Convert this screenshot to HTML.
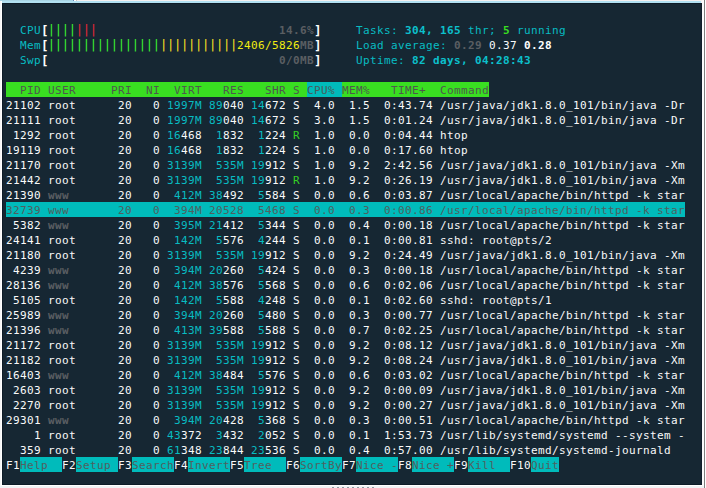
<!DOCTYPE html>
<html lang="en">
<head>
<meta charset="utf-8">
<title>htop</title>
<style>
html,body{margin:0;padding:0;}
body{width:706px;height:488px;overflow:hidden;background:#f1f3f5;position:relative;
font-family:"DejaVu Sans Mono","Liberation Mono",monospace;}
#tabs{position:absolute;left:0;top:0;width:706px;height:1px;background:#f4efee;}
#tabs b{position:absolute;left:0;top:0;width:73px;height:1px;background:#a9d5e5;}
#tabs u{position:absolute;left:73px;top:0;width:1px;height:1px;background:#6a86b8;}
#tabs s{position:absolute;left:74px;top:0;width:2px;height:1px;background:#ffffff;}
#tabs em{position:absolute;left:76px;top:0;width:1px;height:1px;background:#cfc9c9;}
#strip{position:absolute;left:2px;top:1px;width:699px;height:2px;background:#b1e0f1;}
#wl{position:absolute;left:0;top:1px;width:2px;height:485px;background:linear-gradient(90deg,#f6f7f8 0,#f6f7f8 1px,#fff 1px,#fff 2px);}
#wb{position:absolute;left:1px;top:485px;width:703px;height:1px;background:#fff;}
#wr{position:absolute;left:702px;top:0;width:2px;height:486px;background:#fbfbfb;}
#gl{position:absolute;left:704px;top:0;width:1px;height:488px;background:#808080;}
#gw{position:absolute;left:705px;top:0;width:1px;height:488px;background:#fff;}
#grip i{position:absolute;top:487px;width:2px;height:1px;background:#9299a1;}
#term{position:absolute;left:2px;top:3px;width:700px;height:482px;background:#162733;
box-shadow:inset 1px 1px 0 #0d1b27, inset 0 -1px 0 #0d1b27, inset -1px 0 0 #111f2b;}
.bg{position:absolute;height:15px;}
.gr{background:#39de21;}
.cy{background:#00bbbb;}
.l{position:absolute;left:6px;height:15px;line-height:15px;margin-top:1.0px;font-size:11px;white-space:pre;color:#fafafa;
letter-spacing:0.3774px;font-kerning:none;font-variant-ligatures:none;}
.c{color:#08bcc2;}
.C{color:#0cc0cc;font-weight:bold;}
.g{color:#35d024;}
.G{color:#39de21;font-weight:bold;}
.r{color:#c82030;}
.vg,.vr,.vy{font-size:13px;letter-spacing:-0.8267px;line-height:0;position:relative;left:-0.6px;}
.vy{left:-0.3px;}
.vg{color:#3cea30;}
.vr{color:#e02838;}
.vy{color:#eedc24;}
.bk{color:#ffffff;font-weight:bold;font-size:12.5px;letter-spacing:-0.5256px;line-height:0;position:relative;top:1px;}
.Y{color:#f2ec10;}
.k{color:#5a5e62;font-weight:bold;}
.b{color:#ffffff;font-weight:bold;}
.hd{color:#4e584e;}
.hs{color:#4a5a5a;}
.sel{color:#50605f;}
.fk{color:#50605f;}
</style>
</head>
<body>
<div id="tabs"><b></b><u></u><s></s><em></em></div>
<div id="strip"></div>
<div id="wl"></div><div id="wb"></div><div id="wr"></div><div id="gl"></div><div id="gw"></div>
<div id="grip"><i style="left:332px"></i><i style="left:337px"></i><i style="left:342px"></i><i style="left:347px"></i><i style="left:352px"></i><i style="left:357px"></i><i style="left:362px"></i><i style="left:367px"></i><i style="left:372px"></i></div>
<div id="term"></div>
<div class="bg gr" style="left:6px;top:82px;width:483px"></div>
<div class="bg cy" style="left:307px;top:82px;width:35px"></div>
<div class="bg cy" style="left:6px;top:202px;width:679px"></div>
<div class="bg cy" style="left:20px;top:457px;width:42px"></div>
<div class="bg cy" style="left:76px;top:457px;width:42px"></div>
<div class="bg cy" style="left:132px;top:457px;width:42px"></div>
<div class="bg cy" style="left:188px;top:457px;width:42px"></div>
<div class="bg cy" style="left:244px;top:457px;width:42px"></div>
<div class="bg cy" style="left:300px;top:457px;width:42px"></div>
<div class="bg cy" style="left:356px;top:457px;width:42px"></div>
<div class="bg cy" style="left:412px;top:457px;width:42px"></div>
<div class="bg cy" style="left:468px;top:457px;width:42px"></div>
<div class="bg cy" style="left:531px;top:457px;width:28px"></div>
<div class="l" style="top:22px">  <span class="c">CPU</span><span class="bk">[</span><span class="vg">||||</span><span class="vr">|||</span>                          <span class="k">14.6%</span><span class="bk">]</span>     <span class="c">Tasks: </span><span class="C">304, 165</span><span class="c"> thr; </span><span class="G">5</span><span class="c"> running</span></div>
<div class="l" style="top:37px">  <span class="c">Mem</span><span class="bk">[</span><span class="vg">||||||||||||||||</span><span class="vy">|||||||||||</span><span class="Y">2406/5826</span><span class="k">MB</span><span class="bk">]</span>     <span class="c">Load average: </span><span class="k">0.29</span> 0.37 <span class="b">0.28</span></div>
<div class="l" style="top:52px">  <span class="c">Swp</span><span class="bk">[</span>                                 <span class="k">0/0MB</span><span class="bk">]</span>     <span class="c">Uptime: </span><span class="C">82 days, 04:28:43</span></div>
<div class="l" style="top:82px"><span class="hd">  PID USER     PRI  NI  VIRT   RES   SHR S <span class="hs">CPU% </span>MEM%   TIME+  Command</span></div>
<div class="l" style="top:97px">21102 root      20   0 <span class="c">1997M</span> <span class="c">89</span>040 <span class="c">14</span>672 S  4.0  1.5  0:43.74 /usr/java/jdk1.8.0_101/bin/java -Dr</div>
<div class="l" style="top:112px">21111 root      20   0 <span class="c">1997M</span> <span class="c">89</span>040 <span class="c">14</span>672 S  3.0  1.5  0:01.24 /usr/java/jdk1.8.0_101/bin/java -Dr</div>
<div class="l" style="top:127px"> 1292 root      20   0 <span class="c">16</span>468  <span class="c">1</span>832  <span class="c">1</span>224 <span class="g">R</span>  1.0  0.0  0:04.44 htop</div>
<div class="l" style="top:142px">19119 root      20   0 <span class="c">16</span>468  <span class="c">1</span>832  <span class="c">1</span>224 S  1.0  0.0  0:17.60 htop</div>
<div class="l" style="top:157px">21170 root      20   0 <span class="c">3139M</span>  <span class="c">535M</span> <span class="c">19</span>912 S  1.0  9.2  2:42.56 /usr/java/jdk1.8.0_101/bin/java -Xm</div>
<div class="l" style="top:172px">21442 root      20   0 <span class="c">3139M</span>  <span class="c">535M</span> <span class="c">19</span>912 <span class="g">R</span>  1.0  9.2  0:26.19 /usr/java/jdk1.8.0_101/bin/java -Xm</div>
<div class="l" style="top:187px">21390 <span class="k">www</span>       20   0  <span class="c">412M</span> <span class="c">38</span>492  <span class="c">5</span>584 S  0.0  0.6  0:03.87 /usr/local/apache/bin/httpd -k star</div>
<div class="l" style="top:202px"><span class="sel">32739 www       20   0  394M 20528  5468 S  0.0  0.3  0:00.86 /usr/local/apache/bin/httpd -k star</span></div>
<div class="l" style="top:217px"> 5382 <span class="k">www</span>       20   0  <span class="c">395M</span> <span class="c">21</span>412  <span class="c">5</span>344 S  0.0  0.4  0:00.18 /usr/local/apache/bin/httpd -k star</div>
<div class="l" style="top:232px">24141 root      20   0  <span class="c">142M</span>  <span class="c">5</span>576  <span class="c">4</span>244 S  0.0  0.1  0:00.81 sshd: root@pts/2</div>
<div class="l" style="top:247px">21180 root      20   0 <span class="c">3139M</span>  <span class="c">535M</span> <span class="c">19</span>912 S  0.0  9.2  0:24.49 /usr/java/jdk1.8.0_101/bin/java -Xm</div>
<div class="l" style="top:262px"> 4239 <span class="k">www</span>       20   0  <span class="c">394M</span> <span class="c">20</span>260  <span class="c">5</span>424 S  0.0  0.3  0:00.18 /usr/local/apache/bin/httpd -k star</div>
<div class="l" style="top:277px">28136 <span class="k">www</span>       20   0  <span class="c">412M</span> <span class="c">38</span>576  <span class="c">5</span>568 S  0.0  0.6  0:02.06 /usr/local/apache/bin/httpd -k star</div>
<div class="l" style="top:292px"> 5105 root      20   0  <span class="c">142M</span>  <span class="c">5</span>588  <span class="c">4</span>248 S  0.0  0.1  0:02.60 sshd: root@pts/1</div>
<div class="l" style="top:307px">25989 <span class="k">www</span>       20   0  <span class="c">394M</span> <span class="c">20</span>260  <span class="c">5</span>480 S  0.0  0.3  0:00.77 /usr/local/apache/bin/httpd -k star</div>
<div class="l" style="top:322px">21396 <span class="k">www</span>       20   0  <span class="c">413M</span> <span class="c">39</span>588  <span class="c">5</span>588 S  0.0  0.7  0:02.25 /usr/local/apache/bin/httpd -k star</div>
<div class="l" style="top:337px">21172 root      20   0 <span class="c">3139M</span>  <span class="c">535M</span> <span class="c">19</span>912 S  0.0  9.2  0:08.12 /usr/java/jdk1.8.0_101/bin/java -Xm</div>
<div class="l" style="top:352px">21182 root      20   0 <span class="c">3139M</span>  <span class="c">535M</span> <span class="c">19</span>912 S  0.0  9.2  0:08.24 /usr/java/jdk1.8.0_101/bin/java -Xm</div>
<div class="l" style="top:367px">16403 <span class="k">www</span>       20   0  <span class="c">412M</span> <span class="c">38</span>484  <span class="c">5</span>576 S  0.0  0.6  0:03.02 /usr/local/apache/bin/httpd -k star</div>
<div class="l" style="top:382px"> 2603 root      20   0 <span class="c">3139M</span>  <span class="c">535M</span> <span class="c">19</span>912 S  0.0  9.2  0:00.09 /usr/java/jdk1.8.0_101/bin/java -Xm</div>
<div class="l" style="top:397px"> 2270 root      20   0 <span class="c">3139M</span>  <span class="c">535M</span> <span class="c">19</span>912 S  0.0  9.2  0:00.27 /usr/java/jdk1.8.0_101/bin/java -Xm</div>
<div class="l" style="top:412px">29301 <span class="k">www</span>       20   0  <span class="c">394M</span> <span class="c">20</span>428  <span class="c">5</span>368 S  0.0  0.3  0:00.51 /usr/local/apache/bin/httpd -k star</div>
<div class="l" style="top:427px">    1 root      20   0 <span class="c">43</span>372  <span class="c">3</span>432  <span class="c">2</span>052 S  0.0  0.1  1:53.73 /usr/lib/systemd/systemd --system -</div>
<div class="l" style="top:442px">  359 root      20   0 <span class="c">61</span>348 <span class="c">23</span>844 <span class="c">23</span>536 S  0.0  0.4  0:57.00 /usr/lib/systemd/systemd-journald</div>
<div class="l" style="top:457px">F1<span class="fk">Help  </span>F2<span class="fk">Setup </span>F3<span class="fk">Search</span>F4<span class="fk">Invert</span>F5<span class="fk">Tree  </span>F6<span class="fk">SortBy</span>F7<span class="fk">Nice -</span>F8<span class="fk">Nice +</span>F9<span class="fk">Kill  </span>F10<span class="fk">Quit</span></div>
</body>
</html>
